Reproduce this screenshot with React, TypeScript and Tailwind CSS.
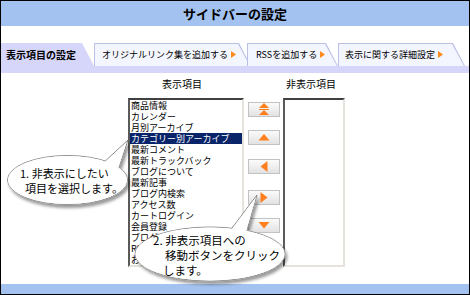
import clsx from "clsx";

const ITEMS = [
  "商品情報",
  "カレンダー",
  "月別アーカイブ",
  "カテゴリー別アーカイブ",
  "最新コメント",
  "最新トラックバック",
  "ブログについて",
  "最新記事",
  "ブログ内検索",
  "アクセス数",
  "カートログイン",
  "会員登録",
  "ブログリーダー",
  "RSS",
  "お知らせ",
];

const SELECTED = 3;

function TabArrow() {
  return (
    <svg width="5" height="7" viewBox="0 0 5 7" className="shrink-0">
      <path d="M0 0 L5 3.5 L0 7 Z" fill="#ff8a1c" />
    </svg>
  );
}

interface TabProps {
  label: string;
  active?: boolean;
  className: string;
  padClass: string;
}

function Tab({ label, active, className, padClass }: TabProps) {
  return (
    <div
      className={clsx(
        "h-[23px] shrink-0 [clip-path:polygon(0_0,calc(100%_-_12px)_0,100%_100%,0_100%)]",
        active ? "bg-[#d6d6fb]" : "bg-[#bcc0e6]",
        className
      )}
    >
      <div
        className={clsx(
          "flex h-full w-full items-center gap-[3px] [clip-path:polygon(1px_1px,calc(100%_-_13px)_1px,calc(100%_-_1px)_100%,1px_100%)]",
          active ? "bg-[#d6d6fb] text-[10px] font-bold" : "bg-[#f4f6ff] text-[9px]",
          padClass
        )}
      >
        <span className="whitespace-nowrap leading-none text-black">{label}</span>
        {!active && <TabArrow />}
      </div>
    </div>
  );
}

type Dir = "top" | "up" | "left" | "right" | "down" | "bottom";

function MoveIcon({ dir }: { dir: Dir }) {
  const fill = "#ff7f1e";
  if (dir === "top")
    return (
      <svg width="12" height="13" viewBox="0 0 12 13">
        <path d="M6 0 L11 5 L1 5 Z" fill={fill} />
        <rect x="1" y="6" width="10" height="1" fill={fill} />
        <path d="M6 7 L11 12 L1 12 Z" fill={fill} />
      </svg>
    );
  if (dir === "bottom")
    return (
      <svg width="12" height="13" viewBox="0 0 12 13">
        <path d="M6 5 L11 0 L1 0 Z" fill={fill} />
        <rect x="1" y="6" width="10" height="1" fill={fill} />
        <path d="M6 12 L11 7 L1 7 Z" fill={fill} />
      </svg>
    );
  if (dir === "up")
    return (
      <svg width="12" height="7" viewBox="0 0 12 7">
        <path d="M6 0 L11.5 6.5 L0.5 6.5 Z" fill={fill} />
      </svg>
    );
  if (dir === "down")
    return (
      <svg width="12" height="7" viewBox="0 0 12 7">
        <path d="M6 6.5 L11.5 0 L0.5 0 Z" fill={fill} />
      </svg>
    );
  if (dir === "left")
    return (
      <svg width="8" height="11" viewBox="0 0 8 11">
        <path d="M0.5 5.5 L7.5 0 L7.5 11 Z" fill={fill} />
      </svg>
    );
  return (
    <svg width="8" height="11" viewBox="0 0 8 11">
      <path d="M7.5 5.5 L0.5 0 L0.5 11 Z" fill={fill} />
    </svg>
  );
}

function MoveButton({ dir, className }: { dir: Dir; className: string }) {
  return (
    <button
      className={clsx(
        "flex h-[15px] w-[32px] items-center justify-center border border-[#c2c2c2] bg-gradient-to-b from-[#fbfbfb] to-[#e2e2e2]",
        className
      )}
    >
      <MoveIcon dir={dir} />
    </button>
  );
}

function Bubbles() {
  return (
    <svg
      className="pointer-events-none absolute left-0 top-0"
      width="468"
      height="293"
      viewBox="1 1 468 293"
    >
      <defs>
        <filter id="bsh" x="-20%" y="-20%" width="140%" height="160%">
          <feDropShadow dx="2" dy="3" stdDeviation="1.6" floodColor="#000" floodOpacity="0.4" />
        </filter>
      </defs>
      <g filter="url(#bsh)">
        <ellipse cx="67.5" cy="180" rx="60" ry="24.5" fill="#fff" stroke="#8c8c8c" />
        <path d="M102 164 L128 140 L118 170 Z" fill="#fff" stroke="#8c8c8c" />
        <ellipse cx="67.5" cy="180" rx="59.5" ry="24" fill="#fff" />
        <path d="M102.6 164.4 L126.5 142.5 L117.6 170 Z" fill="#fff" />
      </g>
      <g filter="url(#bsh)">
        <ellipse cx="210" cy="254" rx="75" ry="27" fill="#fff" stroke="#8c8c8c" />
        <path d="M226 236 L257 195 L244 240 Z" fill="#fff" stroke="#8c8c8c" />
        <ellipse cx="210" cy="254" rx="74.5" ry="26.5" fill="#fff" />
        <path d="M226.8 236 L255.8 197.5 L243.6 240 Z" fill="#fff" />
      </g>
    </svg>
  );
}

export default function App() {
  return (
    <div className="relative flex h-[295px] w-[470px] flex-col overflow-hidden border border-black bg-white font-['Noto_Sans_CJK_JP','Noto_Sans',sans-serif] text-black">
      {/* Title */}
      <div className="flex h-[25px] shrink-0 items-center justify-center bg-[#a3c2ef]">
        <span className="text-[13px] font-bold leading-none">サイドバーの設定</span>
      </div>

      <div className="h-[17px] shrink-0" />

      {/* Tabs */}
      <div className="flex h-[23px] shrink-0">
        <Tab label="表示項目の設定" active className="w-[93px]" padClass="pl-[5px]" />
        <Tab label="オリジナルリンク集を追加する" className="w-[157px]" padClass="pl-[8px]" />
        <Tab label="RSSを追加する" className="-ml-[4px] w-[91px]" padClass="pl-[9px]" />
        <Tab label="表示に関する詳細設定" className="w-[127px]" padClass="pl-[7px]" />
      </div>
      <div className="h-[7px] shrink-0 bg-[#d6d6fb]" />

      {/* Column labels */}
      <div className="flex h-[25px] shrink-0 items-start pt-[5px] text-[10px] leading-[12px]">
        <span className="ml-[161px]">表示項目</span>
        <span className="ml-[84px]">非表示項目</span>
      </div>

      {/* Lists */}
      <div className="flex h-[186px] shrink-0 items-start">
        <div className="ml-[127px] h-[169px] w-[116px] overflow-hidden border-2 border-b-[#e6e3dc] border-l-[#5a5a5a] border-r-[#e6e3dc] border-t-[#404040] bg-white">
          {ITEMS.map((item, i) => (
            <div
              key={item}
              className={clsx(
                "h-[11px] whitespace-nowrap pl-[1px] text-[9px] leading-[11px]",
                i === SELECTED && "bg-[#0a246a] text-white"
              )}
            >
              {item}
            </div>
          ))}
        </div>

        <div className="ml-[4px] flex flex-col">
          <MoveButton dir="top" className="mt-[4px]" />
          <MoveButton dir="up" className="mt-[13px]" />
          <MoveButton dir="left" className="mt-[14px]" />
          <MoveButton dir="right" className="mt-[16px]" />
          <MoveButton dir="down" className="mt-[13px]" />
          <MoveButton dir="bottom" className="mt-[14px]" />
        </div>

        <div className="ml-[3px] h-[169px] w-[62px] border-2 border-b-[#e6e3dc] border-l-[#5a5a5a] border-r-[#e6e3dc] border-t-[#404040] bg-white" />
      </div>

      <div className="h-[10px] shrink-0 bg-[#a3c2ef]" />

      {/* Callouts */}
      <Bubbles />
      <div className="absolute left-[19px] top-[165px] text-[11px] leading-[15px]">
        <div>1. 非表示にしたい</div>
        <div className="pl-[5px]">項目を選択します。</div>
      </div>
      <div className="absolute left-[152px] top-[232px] text-[11.5px] leading-[15px]">
        <div>2. 非表示項目への</div>
        <div className="pl-[12px]">移動ボタンをクリック</div>
        <div className="pl-[10px]">します。</div>
      </div>
    </div>
  );
}
